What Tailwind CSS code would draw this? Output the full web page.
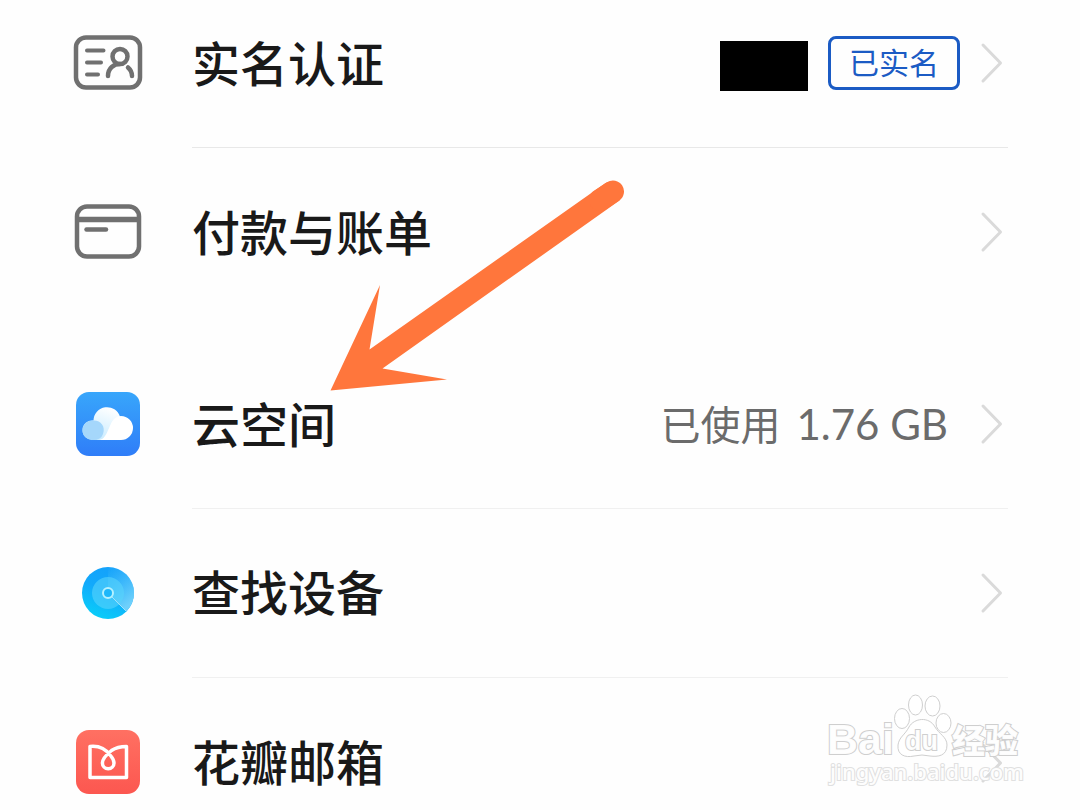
<!DOCTYPE html>
<html lang="zh-CN">
<head>
<meta charset="utf-8">
<meta name="viewport" content="width=device-width, initial-scale=1">
<title>帐号中心</title>
<script src="https://cdn.jsdelivr.net/npm/@tailwindcss/browser@4"></script>
</head>
<body class="relative h-screen overflow-hidden bg-[#fefefe] font-['Noto_Sans_CJK_SC',sans-serif] text-[#191919]">
<svg class="hidden" aria-hidden="true">
  <symbol id="chevron" viewBox="0 0 24 44"><path d="M3 4 20.500 22 3 40" fill="none" stroke="#dadada" stroke-width="3" stroke-linecap="round" stroke-linejoin="round"/></symbol>
</svg>
<main class="flex flex-col gap-6 -mt-5">
  <ul>
    <li>
      <a href="#identity" class="flex h-[168px] items-center gap-12 pl-18">
        <svg class="size-18 shrink-0" viewBox="0 0 72 72" fill="none" stroke="#707070" stroke-linecap="round" aria-hidden="true">
          <rect x="4" y="9.500" width="64" height="50" rx="10" stroke-width="4.500"/>
          <path d="M15 22.500h16.500M15 34.500h14M15 46.500h11" stroke-width="4"/>
          <circle cx="48" cy="28.500" r="7.500" stroke-width="4.500"/>
          <path d="M36 48C36 40 42 36 48 36M56 39.500Q60 43 60 48" stroke-width="4.500"/>
        </svg>
        <span class="flex h-full min-w-0 flex-1 items-center border-b border-[#e8e8e8] mr-18">
          <span class="flex-1 pb-1.5 text-5xl font-medium">实名认证</span>
          <span class="h-[50px] w-[88px] bg-black mt-1"></span>
          <span class="mb-0.5 ml-5 flex h-[54px] w-[132px] items-center justify-center rounded-lg border-3 border-[#1b5bc4] pb-1 text-3xl leading-none text-[#1b5bc4]">已实名</span>
          <svg class="ml-5 mr-1 mb-0.5 h-11 w-6" aria-hidden="true"><use href="#chevron"/></svg>
        </span>
      </a>
    </li>
    <li>
      <a href="#payment" class="flex h-[169px] items-center gap-12 pl-18">
        <svg class="size-18 shrink-0" viewBox="0 0 72 72" fill="none" stroke="#707070" stroke-linecap="round" aria-hidden="true">
          <rect x="5" y="9.500" width="62" height="50" rx="10" stroke-width="4.500"/>
          <path d="M5 22.500h62" stroke-width="5.500" stroke-linecap="butt"/><path d="M14.500 32.500h19.500" stroke-width="4.500"/>
        </svg>
        <span class="flex h-full min-w-0 flex-1 items-center mr-18">
          <span class="flex-1 pb-1.5 text-5xl font-medium">付款与账单</span>
          <svg class="mr-1 mb-0.5 h-11 w-6" aria-hidden="true"><use href="#chevron"/></svg>
        </span>
      </a>
    </li>
  </ul>
  <ul>
    <li>
      <a href="#cloud" class="flex h-[168px] items-center gap-12 pl-18">
        <svg class="mb-0.5 size-18 shrink-0" viewBox="0 0 72 72" aria-hidden="true">
          <defs>
            <linearGradient id="sky" x1="0" y1="0" x2="0" y2="1"><stop stop-color="#38a6fb"/><stop offset="1" stop-color="#2f7df8"/></linearGradient>
            <linearGradient id="puff" x1="0.700" y1="0" x2="0.300" y2="1"><stop stop-color="#fff"/><stop offset="1" stop-color="#c5eaff"/></linearGradient>
          </defs>
          <rect x="4" y="4" width="64" height="64" rx="13" fill="url(#sky)"/>
          <path d="M21 52a9.800 9.800 0 1 1 0.500-19.500A13.500 13.500 0 0 1 48 29L38 52Z" fill="url(#puff)"/>
          <path d="M21 52a9.800 9.800 0 1 1 0.500-19.500C28 32 34 38 31 46Q29 52 21 52Z" fill="#a5d7fb"/>
          <path d="M27 52C38 51 36 28 49 28a12 12 0 0 1 0 24Z" fill="#fff"/>
        </svg>
        <span class="flex h-full min-w-0 flex-1 items-center border-b border-[#f0f0f0] mr-18">
          <span class="flex-1 pb-1.5 text-5xl font-medium">云空间</span>
          <span class="flex items-baseline gap-4 pb-1 text-[40px] text-[#6b6b6b]">已使用 <span class="font-[Lato,sans-serif] text-[42px] leading-none">1.76 GB</span></span>
          <svg class="ml-8 mr-1 mb-0.5 h-11 w-6" aria-hidden="true"><use href="#chevron"/></svg>
        </span>
      </a>
    </li>
    <li>
      <a href="#find" class="flex h-[169px] items-center gap-12 pl-18">
        <svg class="mb-0.5 size-18 shrink-0" viewBox="0 0 72 72" aria-hidden="true">
          <defs><linearGradient id="radar" x1="0.800" y1="0" x2="0.400" y2="1"><stop stop-color="#15a0fb"/><stop offset="0.500" stop-color="#12a9fb"/><stop offset="1" stop-color="#09ccf9"/></linearGradient><linearGradient id="sweep" x1="0" y1="0" x2="0.500" y2="1"><stop stop-color="#5bc6fa" stop-opacity="0"/><stop offset="1" stop-color="#6fd0fb"/></linearGradient></defs>
          <circle cx="36" cy="36" r="26" fill="url(#radar)"/>
          <path d="M36 36V10A26 26 0 0 1 54.400 54.400Z" fill="url(#sweep)"/>
          <circle cx="36" cy="36" r="16" fill="#58d3fb" opacity=".6"/>
          <path d="m39 39 15.400 15.400" stroke="#9fe2fc" stroke-width="1"/>
          <circle cx="36" cy="36" r="5" fill="#1db7fa" stroke="#b4f1ff" stroke-width="2"/>
        </svg>
        <span class="flex h-full min-w-0 flex-1 items-center border-b border-[#f0f0f0] mr-18">
          <span class="flex-1 pb-1.5 text-5xl font-medium">查找设备</span>
          <svg class="mr-1 h-11 w-6" aria-hidden="true"><use href="#chevron"/></svg>
        </span>
      </a>
    </li>
    <li>
      <a href="#mail" class="flex h-[169px] items-center gap-12 pl-18">
        <svg class="mb-0.5 size-18 shrink-0" viewBox="0 0 72 72" aria-hidden="true">
          <defs><linearGradient id="coral" x1="0" y1="0" x2="0" y2="1"><stop stop-color="#ff7062"/><stop offset="1" stop-color="#fc5750"/></linearGradient></defs>
          <rect x="4" y="4" width="64" height="64" rx="13" fill="url(#coral)"/>
          <path d="M39.500 24.500C44 21.500 48 20.500 54.500 20.500V51.500H18V20.500C27 19.500 34 23.500 38.500 29.500C41 32.500 42 34.500 42 37A5.800 5.800 0 0 1 30.400 37C30.400 33 34 29 39.500 24.500Z" fill="none" stroke="#fff" stroke-width="3.500" stroke-linejoin="round"/>
        </svg>
        <span class="flex h-full min-w-0 flex-1 items-center mr-18">
          <span class="flex-1 pb-1.5 text-5xl font-medium">花瓣邮箱</span>
          <svg class="mr-1 h-11 w-6" aria-hidden="true"><use href="#chevron"/></svg>
        </span>
      </a>
    </li>
  </ul>
</main>
<svg class="pointer-events-none absolute left-[330px] top-[178px] h-[214px] w-[296px]" viewBox="330 178 296 214" aria-hidden="true">
  <path d="M330.500 390.500 380 285 369.500 349.500 605.500 183A11.500 11.500 0 0 1 619.500 200.500L382.500 368.500 447 379.500Z" fill="#ff763c"/>
  <path d="M600 200 613 191.500" stroke="#ff763c" stroke-width="22" stroke-linecap="round"/>
</svg>
<svg class="pointer-events-none absolute left-[820px] top-[685px] h-[110px] w-[215px]" viewBox="820 685 215 110" role="img" aria-label="Baidu 经验 jingyan.baidu.com">
  <g fill="#fff" fill-opacity=".95" stroke="#cfcfcf" stroke-width="1">
    <g stroke-width="2" paint-order="stroke" font-weight="700">
      <text x="827" y="754" font-family="Liberation Sans, sans-serif" font-size="43">Bai</text>
      <text x="952" y="753" font-family="Noto Sans CJK SC, sans-serif" font-size="33" font-weight="900">经验</text>
    </g>
    <ellipse cx="902" cy="718.500" rx="7.500" ry="10"/>
    <ellipse cx="915.500" cy="705" rx="7" ry="10"/>
    <ellipse cx="932.500" cy="706" rx="7.500" ry="10"/>
    <ellipse cx="943.500" cy="723" rx="7.500" ry="9.500"/>
    <path d="M909 727C914 718 929 716 935 727C939 734 947 737 947 745C947 756 938 757 930 756Q922 754 914 756C905 758 897 755 898 745C899 737 905 735 909 727Z"/>
    <text x="905" y="750" font-family="Liberation Sans, sans-serif" font-size="27" font-weight="700" stroke-width="2" paint-order="stroke">du</text>
    <text x="830" y="780" font-family="Noto Sans, sans-serif" font-size="22" font-weight="500" stroke="#e0e0e0" stroke-width="2" paint-order="stroke">jingyan.baidu.com</text>
  </g>
</svg>
</body>
</html>
